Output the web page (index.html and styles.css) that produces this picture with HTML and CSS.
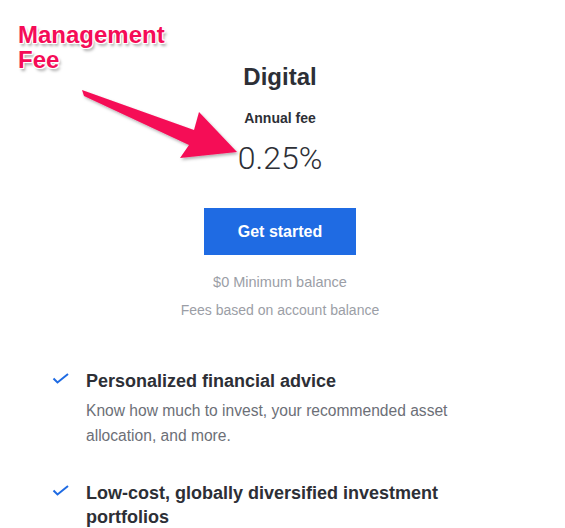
FILE: index.html
```html
<!DOCTYPE html>
<html lang="en">
<head>
<meta charset="utf-8">
<title>Digital plan</title>
<link rel="stylesheet" href="styles.css">
</head>
<body>
<div class="page">
  <div class="annotation">
    <div class="note">Management<br>Fee</div>
    <svg class="arrow" width="565" height="200" viewBox="0 0 565 200">
      <defs>
        <filter id="sh" x="-10%" y="-10%" width="130%" height="140%">
          <feDropShadow dx="1.5" dy="2" stdDeviation="1.5" flood-color="#000" flood-opacity="0.3"/>
        </filter>
      </defs>
      <polygon filter="url(#sh)" fill="#f50c57" points="82,90 84,96 189,145 180,158 237,152 199,112 194,130"/>
    </svg>
  </div>
  <section class="plan">
    <h1 class="plan-title">Digital</h1>
    <div class="fee-label">Annual fee</div>
    <div class="fee-value">0.25%</div>
    <a class="cta">Get started</a>
    <p class="meta meta-first">$0 Minimum balance</p>
    <p class="meta">Fees based on account balance</p>
  </section>
  <ul class="features">
    <li class="feature">
      <svg class="check" width="18" height="12" viewBox="0 0 18 12"><polyline points="1.5,5.5 5.5,9.5 16,1" fill="none" stroke="#1f6be3" stroke-width="2"/></svg>
      <div class="feature-body">
        <h2 class="feature-title">Personalized financial advice</h2>
        <p class="feature-desc">Know how much to invest, your recommended asset allocation, and more.</p>
      </div>
    </li>
    <li class="feature">
      <svg class="check" width="18" height="12" viewBox="0 0 18 12"><polyline points="1.5,5.5 5.5,9.5 16,1" fill="none" stroke="#1f6be3" stroke-width="2"/></svg>
      <div class="feature-body">
        <h2 class="feature-title">Low-cost, globally diversified investment portfolios</h2>
      </div>
    </li>
  </ul>
</div>
</body>
</html>
```

FILE: styles.css
```css
* { box-sizing: border-box; }
html, body { margin: 0; padding: 0; background: #fff; }
body {
  font-family: "Liberation Sans", Arial, sans-serif;
  color: #2d2f36;
  width: 565px;
  height: 528px;
  overflow: hidden;
}
.page { position: relative; }
.annotation { position: absolute; left: 0; top: 0; width: 565px; height: 200px; z-index: 2; pointer-events: none; }
.note {
  position: absolute;
  left: 18px;
  top: 22px;
  font-size: 24px;
  font-weight: 700;
  line-height: 25px;
  color: #f50c57;
  text-shadow: 1px 0 0 #fff, -1px 0 0 #fff, 0 1px 0 #fff, 0 -1px 0 #fff,
    1px 1px 0 #fff, -1px -1px 0 #fff, 1px -1px 0 #fff, -1px 1px 0 #fff,
    2px 3px 3px rgba(0,0,0,0.35);
}
.arrow { position: absolute; left: 0; top: 0; }
.plan {
  display: flex;
  flex-direction: column;
  align-items: center;
  padding-top: 63px;
  width: 560px;
}
.plan-title {
  margin: 0;
  font-size: 24px;
  line-height: 28px;
  font-weight: 700;
  color: #2d2f36;
}
.fee-label {
  margin-top: 19px;
  font-size: 14px;
  line-height: 16px;
  font-weight: 700;
  color: #2d2f36;
}
.fee-value {
  margin-top: 14px;
  font-family: Roboto, "Liberation Sans", sans-serif;
  font-weight: 300;
  font-size: 32px;
  line-height: 36px;
  color: #2d2f36;
}
.cta {
  margin-top: 32px;
  width: 152px;
  height: 47px;
  background: #1f6be3;
  color: #fff;
  font-weight: 700;
  font-size: 16px;
  display: flex;
  align-items: center;
  justify-content: center;
}
.meta {
  margin: 0;
  font-size: 14.5px;
  line-height: 28px;
  color: #9b9ea6;
}
.meta + .meta { font-size: 14px; }
.meta-first { margin-top: 13px; }
.features {
  list-style: none;
  margin: 45px 0 0;
  padding: 0 0 0 52px;
  display: flex;
  flex-direction: column;
  gap: 33px;
}
.feature { display: flex; gap: 16px; align-items: flex-start; }
.check { flex: none; margin-top: 4px; }
.feature-body { width: 400px; }
.feature-title {
  margin: 0;
  font-size: 18px;
  line-height: 24px;
  font-weight: 700;
  color: #2d2f36;
}
.feature-desc {
  margin: 5px 0 0;
  font-size: 15.6px;
  line-height: 25px;
  color: #6c6f77;
}
```
